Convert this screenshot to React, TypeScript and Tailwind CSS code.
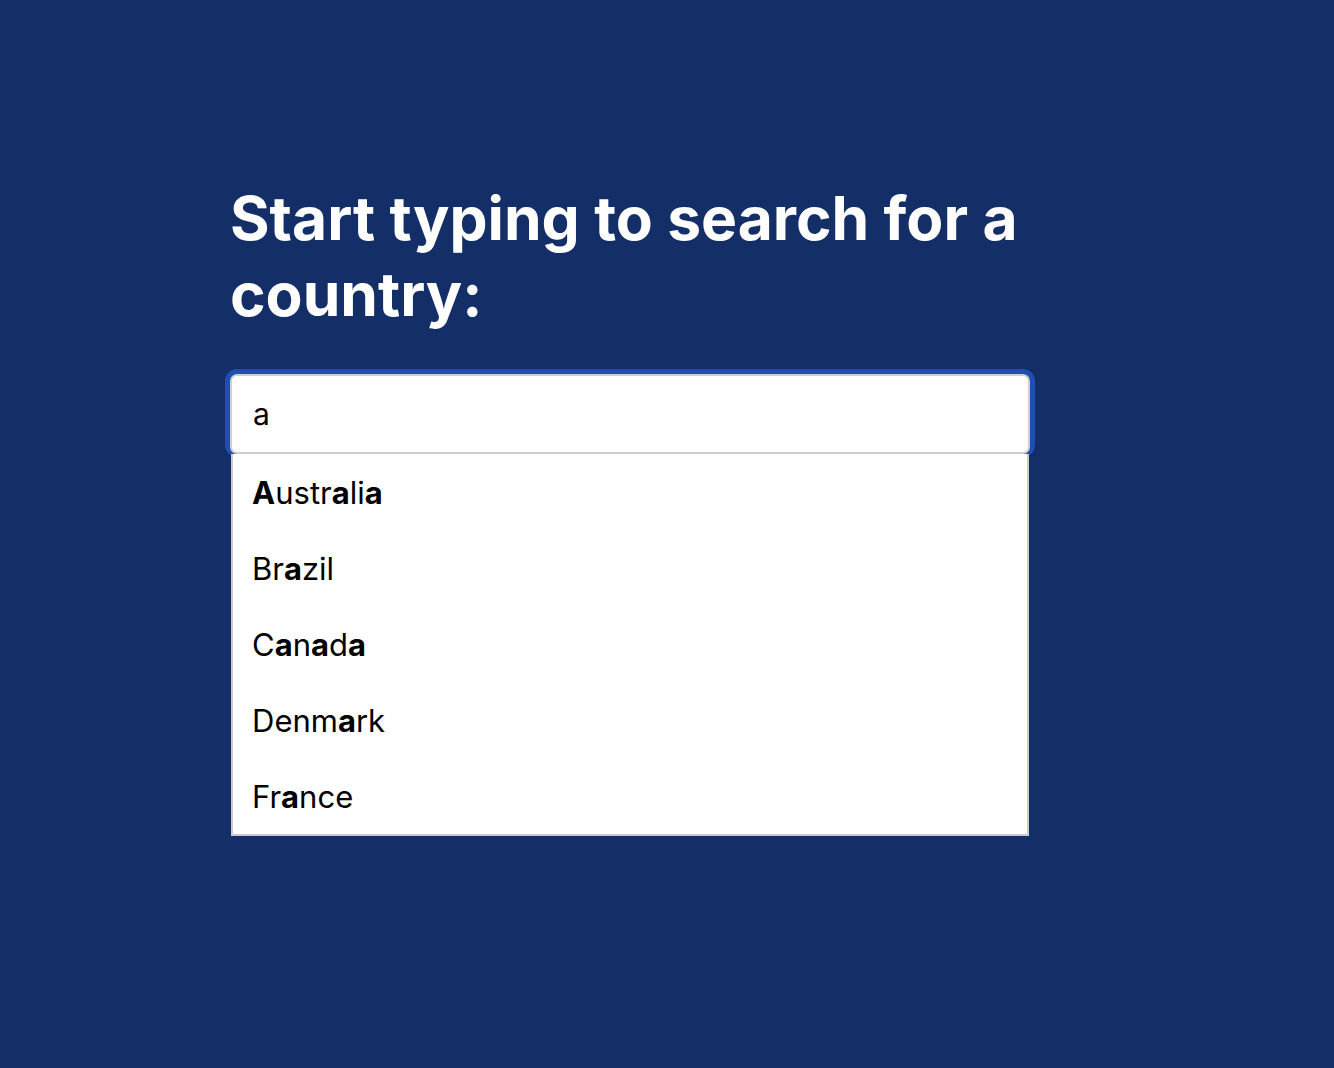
import { useState } from 'react'

const COUNTRIES = ['Australia', 'Brazil', 'Canada', 'Denmark', 'France']

function Highlight({ text, query }: { text: string; query: string }) {
  const q = query.toLowerCase()
  return (
    <>
      {text.split('').map((ch, i) =>
        q && ch.toLowerCase() === q ? (
          <b key={i} className="font-bold">{ch}</b>
        ) : (
          <span key={i}>{ch}</span>
        )
      )}
    </>
  )
}

export default function App() {
  const [query, setQuery] = useState('a')
  const matches = COUNTRIES.filter(c => c.toLowerCase().includes(query.toLowerCase()))

  return (
    <div className="min-h-[1068px] bg-[#142f68] font-['Inter','Noto_Sans',sans-serif]">
      <div className="mx-auto w-[800px] pt-[180px] -translate-x-[37px]">
        <h1 className="text-[60.5px] leading-[76px] font-bold text-white">
          Start typing to search for a country:
        </h1>
        <div className="mt-[42px]">
          {/* focus ring */}
          <div className="-mx-[5px] -mt-[5px] -mb-[3px] rounded-[12px] border-[5px] border-b-[3px] border-[#1d4fb4]">
            <input
              autoFocus
              value={query}
              onChange={e => setQuery(e.target.value)}
              className="block w-full h-[80px] rounded-[7px] border-2 border-[#cfcfcf] bg-white px-[21px] text-[30px] text-black outline-none caret-black"
            />
          </div>
          {query && matches.length > 0 && (
            <ul className="relative mx-[1px] border-x-2 border-b-2 border-[#cccccc] bg-white">
              {matches.map(c => (
                <li key={c} className="h-[76px] flex items-center px-[19px] pt-[2px] text-[31px] text-black">
                  <span><Highlight text={c} query={query} /></span>
                </li>
              ))}
            </ul>
          )}
        </div>
      </div>
    </div>
  )
}
